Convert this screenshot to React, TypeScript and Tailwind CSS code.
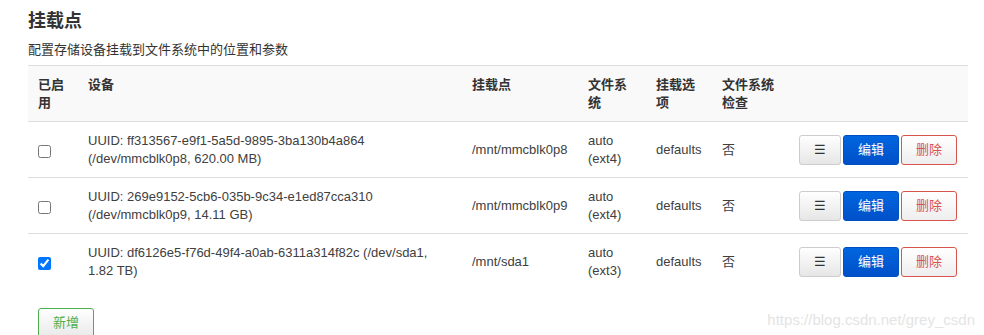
import React from 'react'

const rows = [
  {
    id: 'ff313567',
    enabled: false,
    device: 'UUID: ff313567-e9f1-5a5d-9895-3ba130b4a864 (/dev/mmcblk0p8, 620.00 MB)',
    target: '/mnt/mmcblk0p8',
    fs: 'auto (ext4)',
  },
  {
    id: '269e9152',
    enabled: false,
    device: 'UUID: 269e9152-5cb6-035b-9c34-e1ed87cca310 (/dev/mmcblk0p9, 14.11 GB)',
    target: '/mnt/mmcblk0p9',
    fs: 'auto (ext4)',
  },
  {
    id: 'df6126e5',
    enabled: true,
    device: 'UUID: df6126e5-f76d-49f4-a0ab-6311a314f82c (/dev/sda1, 1.82 TB)',
    target: '/mnt/sda1',
    fs: 'auto (ext3)',
  },
]

const App = () => {
  return (
    <div
      className="relative w-[984px] h-[335px] overflow-hidden bg-white text-[#404040]"
      style={{ fontFamily: '"Liberation Sans", "Noto Sans CJK SC", sans-serif' }}
    >
      <div className="px-[28px] pt-[9px]">
        <h2 className="text-[18px] leading-[24px] font-bold text-[#333]">挂载点</h2>
        <p className="mt-[8px] text-[13px] leading-[18px] text-[#333]">配置存储设备挂载到文件系统中的位置和参数</p>
        <table className="mt-[6px] w-[940px] table-fixed border-collapse text-[13px] leading-[18px]">
          <colgroup>
            <col className="w-[50px]" />
            <col className="w-[384px]" />
            <col className="w-[116px]" />
            <col className="w-[68px]" />
            <col className="w-[66px]" />
            <col className="w-[78px]" />
            <col className="w-[178px]" />
          </colgroup>
          <thead>
            <tr className="bg-[#f9f9f9] border-t border-b border-[#dddddd] h-[55px]">
              {['已启用', '设备', '挂载点', '文件系统', '挂载选项', '文件系统检查', ''].map((h, i) => (
                <th key={i} className="px-[10px] pt-[10px] pb-[9px] text-left align-top font-bold text-[#333]">
                  {h}
                </th>
              ))}
            </tr>
          </thead>
          <tbody>
            {rows.map((r, i) => (
              <tr key={r.id} className={`h-[56px] ${i < rows.length - 1 ? 'border-b border-[#dddddd]' : ''}`}>
                <td className="px-[10px] align-middle">
                  <input type="checkbox" defaultChecked={r.enabled} className="block w-[13px] h-[13px] m-0 mt-[3px]" />
                </td>
                <td className="px-[10px] align-middle">{r.device}</td>
                <td className="px-[10px] align-middle">{r.target}</td>
                <td className="px-[10px] align-middle">{r.fs}</td>
                <td className="px-[10px] align-middle">defaults</td>
                <td className="px-[10px] align-middle">否</td>
                <td className="px-[9px] align-middle">
                  <div className="flex gap-[2px]">
                    <button className="w-[42px] h-[30px] rounded-[3px] border border-[#cccccc] bg-gradient-to-b from-white to-[#e6e6e6] text-[13px] text-[#333]">
                      ☰
                    </button>
                    <button className="w-[56px] h-[30px] rounded-[3px] border border-[#0050c0] bg-gradient-to-b from-[#0066e0] to-[#0050c8] text-[13px] text-white">
                      编辑
                    </button>
                    <button className="w-[56px] h-[30px] rounded-[3px] border border-[#d9534f] bg-gradient-to-b from-white to-[#eeeeee] text-[13px] text-[#d9534f]">
                      删除
                    </button>
                  </div>
                </td>
              </tr>
            ))}
          </tbody>
        </table>
        <button className="mt-[18px] ml-[10px] w-[56px] h-[30px] rounded-[3px] border border-[#4cae4c] bg-gradient-to-b from-white to-[#e9e9e9] text-[13px] text-[#4cae4c]">
          新增
        </button>
      </div>
      <div className="absolute right-[9px] bottom-[4px] text-[15px] text-[#e4e4e4]">https://blog.csdn.net/grey_csdn</div>
    </div>
  )
}

export default App
